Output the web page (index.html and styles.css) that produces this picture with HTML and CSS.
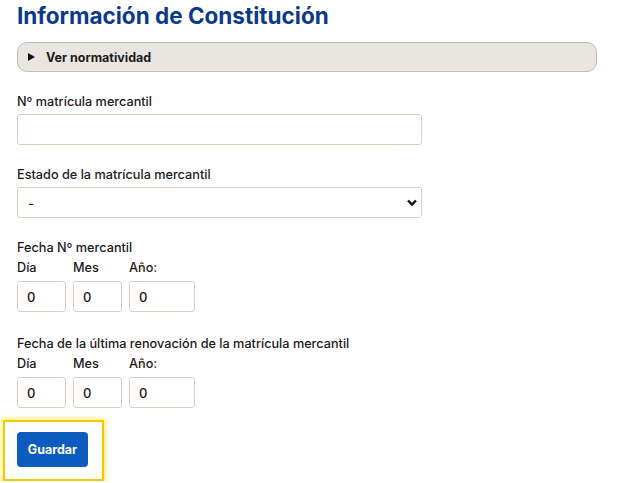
FILE: index.html
```html
<!DOCTYPE html>
<html lang="es">
<head>
  <meta charset="UTF-8">
  <meta name="viewport" content="width=device-width, initial-scale=1">
  <title>Información de Constitución</title>
  <link rel="stylesheet" href="styles.css">
</head>
<body>

<div class="page">
  <h1>Información de Constitución</h1>

  <details class="norms">
    <summary>Ver normatividad</summary>
  </details>

  <form class="constitution-form">
    <div class="field field-first">
      <label for="matricula">Nº matrícula mercantil</label>
      <input type="text" id="matricula" class="wide">
    </div>

    <div class="field">
      <label for="estado">Estado de la matrícula mercantil</label>
      <select id="estado" class="wide">
        <option>-</option>
      </select>
    </div>

    <div class="field">
      <div class="group-label">Fecha Nº mercantil</div>
      <div class="date-row">
        <div class="date-part">
          <label for="dia1">Día</label>
          <input type="text" id="dia1" class="small" value="0">
        </div>
        <div class="date-part">
          <label for="mes1">Mes</label>
          <input type="text" id="mes1" class="small" value="0">
        </div>
        <div class="date-part">
          <label for="anio1">Año:</label>
          <input type="text" id="anio1" class="year" value="0">
        </div>
      </div>
    </div>

    <div class="field field-renewal">
      <div class="group-label">Fecha de la última renovación de la matrícula mercantil</div>
      <div class="date-row">
        <div class="date-part">
          <label for="dia2">Día</label>
          <input type="text" id="dia2" class="small" value="0">
        </div>
        <div class="date-part">
          <label for="mes2">Mes</label>
          <input type="text" id="mes2" class="small" value="0">
        </div>
        <div class="date-part">
          <label for="anio2">Año:</label>
          <input type="text" id="anio2" class="year" value="0">
        </div>
      </div>
    </div>

    <div class="save-focus">
      <button type="submit" class="save-btn">Guardar</button>
    </div>
  </form>
</div>

</body>
</html>
```

FILE: styles.css
```css
/* Reset some default margins */
* {
  margin: 0;
  padding: 0;
  box-sizing: border-box;
}
body {
  font-family: Inter, "Liberation Sans", Arial, sans-serif;
  background-color: #fff;
  color: #1b1b1b;
}
.page {
  padding: 3px 29px 0 17px;
}
h1 {
  color: #0b3a8c;
  font-size: 22.5px;
  font-weight: bold;
  line-height: 26px;
}
.norms {
  margin-top: 13px;
  background-color: #e9e6e1;
  border: 1px solid #c4bcae;
  border-radius: 10px;
  height: 30px;
}
.norms summary {
  list-style: none;
  display: flex;
  align-items: center;
  height: 28px;
  padding-left: 10px;
  font-size: 12.5px;
  font-weight: bold;
  cursor: pointer;
}
.norms summary::-webkit-details-marker {
  display: none;
}
.norms summary::before {
  content: "";
  width: 0;
  height: 0;
  border-top: 4.5px solid transparent;
  border-bottom: 4.5px solid transparent;
  border-left: 7px solid #111;
  margin-right: 11px;
}
.field {
  margin-top: 22px;
}
.field-first {
  margin-top: 22px;
}
.field-renewal {
  margin-top: 24px;
}
label, .group-label {
  display: block;
  font-size: 12.7px;
  font-weight: 500;
  line-height: 16px;
  color: #1b1b1b;
}
.field > label,
.group-label {
  margin-bottom: 4px;
}
input, select {
  font-family: inherit;
  font-size: 13px;
  font-weight: 500;
  color: #1b1b1b;
  border: 1px solid #d8cfc0;
  border-radius: 3px;
  background-color: #fff;
  height: 31px;
}
.wide {
  width: 405px;
  padding: 0 10px;
}
select.wide {
  appearance: none;
  background-image: url("data:image/svg+xml,%3Csvg xmlns='http://www.w3.org/2000/svg' width='10' height='8' viewBox='0 0 10 8'%3E%3Cpath d='M1 1.5l4 4 4-4' fill='none' stroke='%23111' stroke-width='2.4'/%3E%3C/svg%3E");
  background-repeat: no-repeat;
  background-position: right 4px center;
}
.date-row {
  display: flex;
  gap: 7px;
}
.date-part label {
  margin-bottom: 5px;
}
.small {
  width: 49px;
  padding: 0 9px;
}
.year {
  width: 66px;
  padding: 0 9px;
}
.save-focus {
  display: inline-block;
  margin: 12px 0 0 -14px;
  padding: 10px 14px 12px 12px;
  border: 2px solid #f6c800;
  box-shadow: 0 0 4px 2px rgba(255, 238, 80, 0.7);
}
.save-btn {
  display: block;
  width: 71px;
  height: 35px;
  background-color: #0b5cbe;
  color: white;
  border: none;
  border-radius: 4px;
  font-family: inherit;
  font-size: 12.5px;
  font-weight: bold;
  cursor: pointer;
}
```
